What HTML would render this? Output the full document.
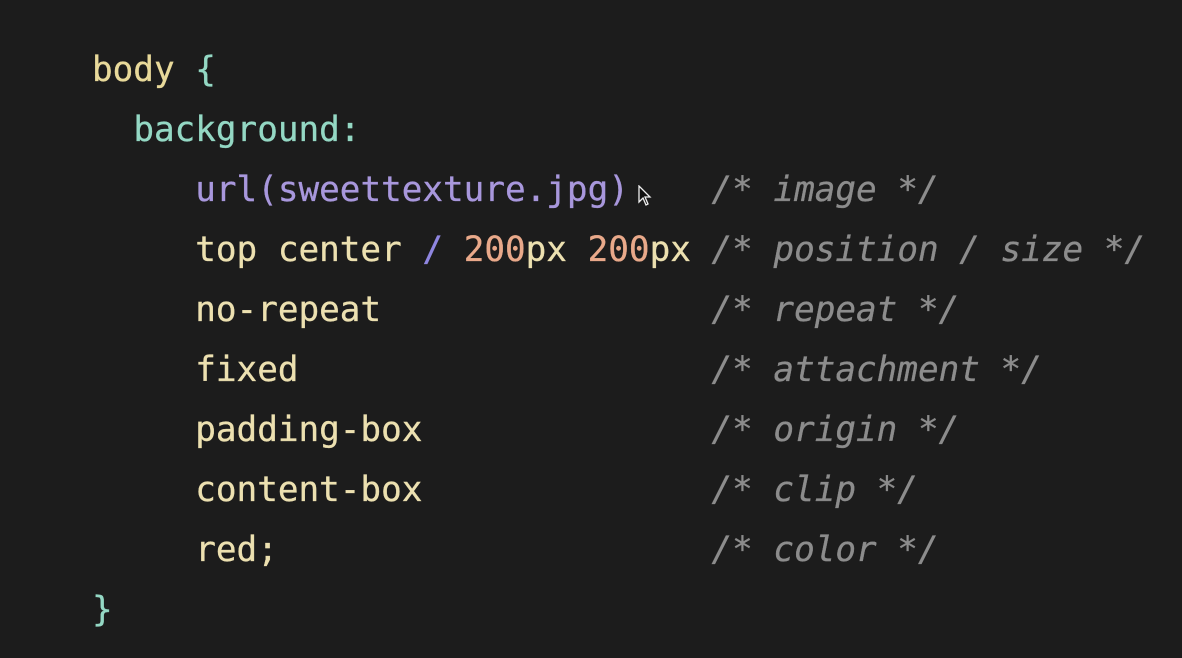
<!DOCTYPE html>
<html><head><meta charset="utf-8"><style>
html,body{margin:0;padding:0;width:1182px;height:658px;background:#1c1c1c;overflow:hidden}
pre{margin:0;position:absolute;left:92px;top:40px;font-family:"DejaVu Sans Mono","Liberation Mono",monospace;font-size:34.3px;line-height:60px;color:#ece0b0;-webkit-text-stroke:0.3px currentColor}
.y{color:#e8d99a}.t{color:#94d8c4}.p{color:#a897dc}.o{color:#e9a98a}.c{color:#8c8c8c;font-style:italic}.s{color:#8f86e0}
</style></head><body>
<pre><span class="y">body</span> <span class="t">{</span>
  <span class="t">background:</span>
     <span class="p">url(sweettexture.jpg)</span>    <span class="c">/* image */</span>
     top center <span class="s">/</span> <span class="o">200</span>px <span class="o">200</span>px <span class="c">/* position / size */</span>
     no-repeat                <span class="c">/* repeat */</span>
     fixed                    <span class="c">/* attachment */</span>
     padding-box              <span class="c">/* origin */</span>
     content-box              <span class="c">/* clip */</span>
     red;                     <span class="c">/* color */</span>
<span class="t">}</span></pre>
<svg style="position:absolute;left:638px;top:185px" width="14" height="22" viewBox="0 0 14 22"><path d="M1 1 L1 17 L5 13 L8 20 L10 19 L7 12 L12 12 Z" fill="#111" stroke="#eee" stroke-width="1.3"/></svg>
</body></html>
